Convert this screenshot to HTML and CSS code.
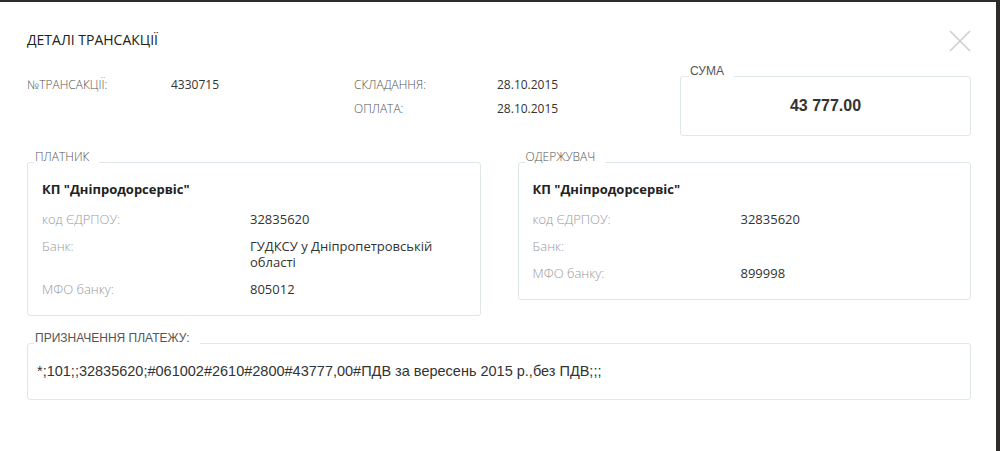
FILE: index.html
```html
<!DOCTYPE html>
<html lang="uk">
<head>
<meta charset="utf-8">
<title>Деталі трансакції</title>
<link rel="stylesheet" href="styles.css">
</head>
<body>
<div class="modal">
  <header class="modal-head">
    <h1 class="modal-title">ДЕТАЛІ ТРАНСАКЦІЇ</h1>
    <button class="close" aria-label="Закрити">
      <svg width="22" height="22" viewBox="0 0 22 22"><path d="M1 1 L21 21 M21 1 L1 21" stroke="#cfcfcf" stroke-width="1.6" fill="none"/></svg>
    </button>
  </header>

  <section class="info">
    <div class="meta">
      <span class="meta-label">№ТРАНСАКЦІЇ:</span>
      <span class="meta-value">4330715</span>
      <span class="meta-label">СКЛАДАННЯ:</span>
      <span class="meta-value">28.10.2015</span>
      <span></span>
      <span></span>
      <span class="meta-label">ОПЛАТА:</span>
      <span class="meta-value">28.10.2015</span>
    </div>
    <fieldset class="box sum-box">
      <legend class="legend legend-arial">СУМА</legend>
      <div class="sum">43 777.00</div>
    </fieldset>
  </section>

  <section class="parties">
    <fieldset class="box party">
      <legend class="legend">ПЛАТНИК</legend>
      <div class="party-name">КП "Дніпродорсервіс"</div>
      <dl class="party-grid">
        <dt>код ЄДРПОУ:</dt><dd>32835620</dd>
        <dt>Банк:</dt><dd>ГУДКСУ у Дніпропетровській<br>області</dd>
        <dt>МФО банку:</dt><dd>805012</dd>
      </dl>
    </fieldset>
    <fieldset class="box party">
      <legend class="legend">ОДЕРЖУВАЧ</legend>
      <div class="party-name">КП "Дніпродорсервіс"</div>
      <dl class="party-grid">
        <dt>код ЄДРПОУ:</dt><dd>32835620</dd>
        <dt>Банк:</dt><dd></dd>
        <dt>МФО банку:</dt><dd>899998</dd>
      </dl>
    </fieldset>
  </section>

  <fieldset class="box purpose">
    <legend class="legend legend-arial">ПРИЗНАЧЕННЯ ПЛАТЕЖУ:</legend>
    <div class="purpose-text">*;101;;32835620;#061002#2610#2800#43777,00#ПДВ за вересень 2015 р.,без ПДВ;;;</div>
  </fieldset>
</div>
</body>
</html>
```

FILE: styles.css
```css
* { box-sizing: border-box; }
html, body { margin: 0; padding: 0; }
body {
  background: #2e2b2a;
  font-family: "Open Sans", "Liberation Sans", sans-serif;
  color: #333;
  width: 1000px;
  height: 451px;
  overflow: hidden;
}
.modal {
  background: #fff;
  width: 996px;
  height: 449px;
  margin-top: 2px;
  padding: 27px 25px 0 27px;
}
.modal-head {
  display: flex;
  align-items: center;
  justify-content: space-between;
  height: 24px;
}
.modal-title {
  margin: 0;
  font-size: 14px;
  font-weight: 400;
  line-height: 20px;
  color: #222;
  position: relative;
  top: -1px;
}
.close {
  border: 0;
  background: none;
  padding: 0;
  width: 22px;
  height: 22px;
  display: block;
}
.close svg { display: block; }

.info {
  display: flex;
  justify-content: space-between;
  align-items: flex-start;
  margin-top: 11px;
}
.meta {
  display: grid;
  grid-template-columns: 144px 183px 143px auto;
  grid-auto-rows: 24px;
  padding-top: 9px;
  font-size: 12px;
  line-height: 24px;
}
.meta-label { color: #555; font-weight: 300; }
.meta-value { color: #333; }

.box {
  margin: 0;
  border: 1px solid #dfe7e9;
  border-radius: 3px;
  min-width: 0;
}
.legend {
  padding: 0 10px 11px 1px;
  font-size: 12px;
  line-height: 14px;
  color: #555;
  font-weight: 300;
}
.legend-arial {
  font-family: "Liberation Sans", Arial, sans-serif;
  font-weight: 400;
  padding-bottom: 10px;
}
.sum-box {
  width: 291px;
  height: 72px;
  padding: 8px 0 0;
}
.sum-box .legend { margin-left: 8px; }
.sum {
  text-align: center;
  font-family: "Liberation Sans", Arial, sans-serif;
  font-weight: 700;
  font-size: 16px;
  line-height: 20px;
  color: #333;
}

.parties {
  display: grid;
  grid-template-columns: 1fr 1fr;
  column-gap: 37px;
  align-items: start;
  margin-top: 14px;
}
.party {
  padding: 6px 13px 18px 14px;
}
.party .legend { margin-left: -8px; }
.party-name {
  font-weight: 700;
  font-size: 13px;
  line-height: 16px;
  color: #222;
  margin-bottom: 14px;
}
.party-grid {
  display: grid;
  grid-template-columns: 208px 1fr;
  row-gap: 11px;
  margin: 0;
  font-size: 13px;
  line-height: 16px;
}
.party-grid dt { color: #9a9a9a; font-weight: 300; }
.party-grid dd { margin: 0; color: #333; }

.purpose {
  margin-top: 15px;
  padding: 7px 8px 19px 9px;
}
.purpose .legend { margin-left: -3px; }
.purpose-text {
  font-family: "Liberation Sans", Arial, sans-serif;
  font-size: 14.5px;
  line-height: 18px;
  color: #333;
}
```
